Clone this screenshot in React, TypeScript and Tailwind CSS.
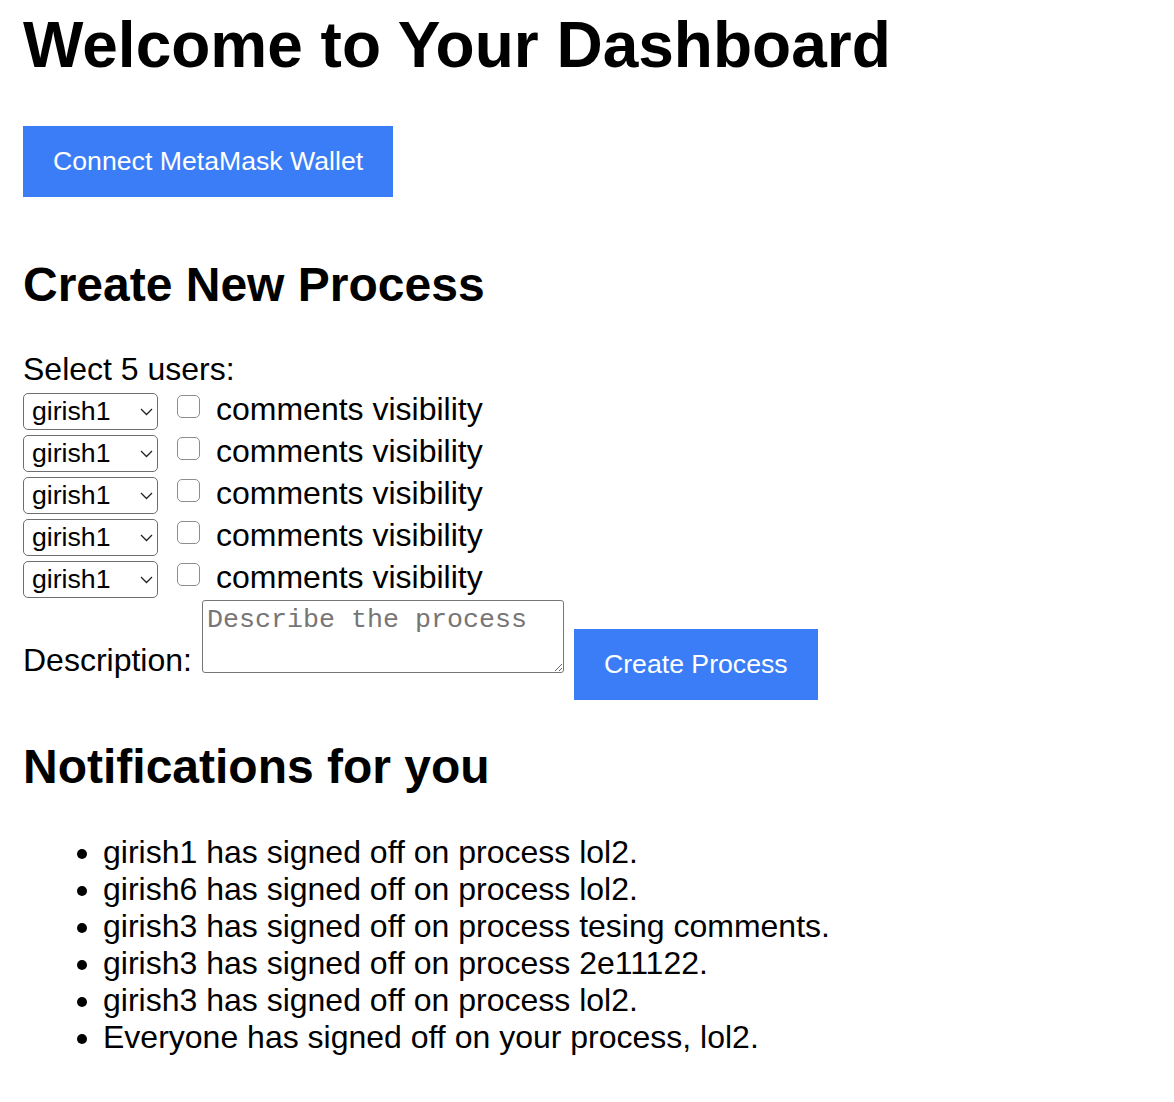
import React from 'react';

const users = ['girish1', 'girish1', 'girish1', 'girish1', 'girish1'];

const notifications = [
  'girish1 has signed off on process lol2.',
  'girish6 has signed off on process lol2.',
  'girish3 has signed off on process tesing comments.',
  'girish3 has signed off on process 2e11122.',
  'girish3 has signed off on process lol2.',
  'Everyone has signed off on your process, lol2.',
];

const UserRow: React.FC<{ value: string; index: number }> = ({ value, index }) => {
  return (
    <div className="flex items-start h-[42px]">
      <div className="relative mt-[5px] w-[135px] h-[37px]">
        <select
          defaultValue={value}
          aria-label={`User ${index + 1}`}
          className="block appearance-none w-full h-full border border-[#6e6e6e] rounded-[5px] bg-white pl-[8px] pr-[28px] text-[26.67px] leading-[31px] text-black"
        >
          <option>girish1</option>
          <option>girish2</option>
          <option>girish3</option>
          <option>girish6</option>
        </select>
        {/* chevron */}
        <svg
          className="absolute right-[5px] top-[15px] pointer-events-none"
          width="13"
          height="8"
          viewBox="0 0 13 8"
          fill="none"
        >
          <polyline points="1,1 6.5,6.5 12,1" stroke="#222" strokeWidth="1.3" />
        </svg>
      </div>
      <input
        type="checkbox"
        className="block appearance-none ml-[19px] mt-[7px] w-[23px] h-[23px] rounded-[5px] border border-[#8d8d8d] bg-white"
      />
      <label className="ml-[16px] mt-[3px] leading-[37px]">comments visibility</label>
    </div>
  );
};

const App: React.FC = () => {
  return (
    <div className="min-h-screen bg-white text-black font-['Liberation_Sans',Arial,sans-serif] text-[32px] pl-[23px] pt-[8px]">
      <h1 className="text-[64px] font-bold leading-[74px]">Welcome to Your Dashboard</h1>

      <button className="mt-[44px] bg-[#3b7df6] text-white text-[26.67px] leading-[31px] px-[30px] py-[20px]">
        Connect MetaMask Wallet
      </button>

      <h2 className="mt-[60px] text-[48px] font-bold leading-[55px]">Create New Process</h2>

      <div className="mt-[39px]">
        <label className="block leading-[37px]">Select 5 users:</label>
        {users.map((u, i) => (
          <UserRow key={i} value={u} index={i} />
        ))}

        <div className="flex items-start">
          <label className="mt-[44px] leading-[37px]">Description:</label>
          <textarea
            placeholder="Describe the process"
            className="block ml-[10px] mt-[2px] w-[362px] h-[73px] p-[4px] border border-[#767676] rounded-[3px] resize font-['Liberation_Mono','Courier_New',monospace] text-[26.67px] leading-[30px] placeholder:text-[#767676]"
          />
          <button className="ml-[10px] mt-[31px] bg-[#3b7df6] text-white text-[26.67px] leading-[31px] px-[30px] py-[20px]">
            Create Process
          </button>
        </div>
      </div>

      <h2 className="mt-[39px] text-[48px] font-bold leading-[55px]">Notifications for you</h2>

      <ul className="mt-[40px] pl-[80px] list-disc pb-[40px]">
        {notifications.map((n, i) => (
          <li key={i} className="leading-[37px]">
            {n}
          </li>
        ))}
      </ul>
    </div>
  );
};

export default App;
